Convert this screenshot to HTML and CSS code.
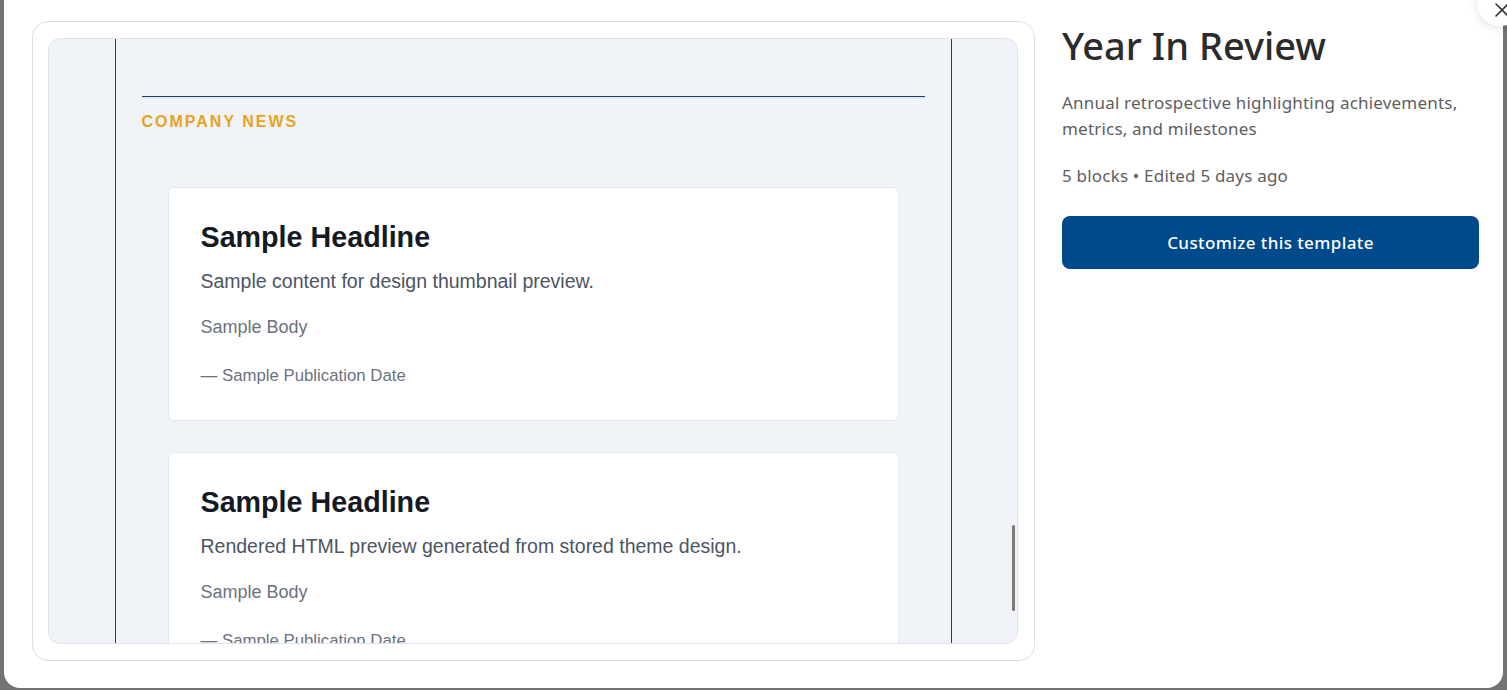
FILE: index.html
```html
<!DOCTYPE html>
<html lang="en">
<head>
<meta charset="utf-8">
<title>Year In Review</title>
<link rel="stylesheet" href="styles.css">
</head>
<body>
<div class="modal">
  <div class="preview-card">
    <div class="preview">
      <div class="sheet">
        <div class="sheet-top"></div>
        <div class="section">
          <div class="section-title">COMPANY NEWS</div>
          <div class="cards">
            <div class="news">
              <div class="news-head">Sample Headline</div>
              <div class="news-sub">Sample content for design thumbnail preview.</div>
              <div class="news-body">Sample Body</div>
              <div class="news-date">— Sample Publication Date</div>
            </div>
            <div class="news">
              <div class="news-head">Sample Headline</div>
              <div class="news-sub">Rendered HTML preview generated from stored theme design.</div>
              <div class="news-body">Sample Body</div>
              <div class="news-date">— Sample Publication Date</div>
            </div>
          </div>
        </div>
      </div>
      <div class="thumb"></div>
    </div>
  </div>
  <div class="info">
    <h1 class="title">Year In Review</h1>
    <p class="desc">Annual retrospective highlighting achievements, metrics, and milestones</p>
    <p class="meta">5 blocks • Edited 5 days ago</p>
    <button class="cta">Customize this template</button>
  </div>
</div>
<button class="close" aria-label="Close">
  <svg width="16" height="16" viewBox="0 0 16 16"><path d="M2 2L14 14M14 2L2 14" stroke="#333" stroke-width="1.6" stroke-linecap="round" fill="none"/></svg>
</button>
</body>
</html>
```

FILE: styles.css
```css
html, body {
  margin: 0;
  padding: 0;
  height: 100%;
  overflow: hidden;
}
body {
  background: #737373;
  font-family: "Noto Sans", "Open Sans", sans-serif;
  position: relative;
}
.modal {
  margin: -20px 4px 0;
  height: 708px;
  box-sizing: border-box;
  background: #fff;
  border-radius: 16px;
  padding: 41px 24px 0 28px;
  display: grid;
  grid-template-columns: 1003px 1fr;
  column-gap: 27px;
  align-items: start;
}
.preview-card {
  height: 640px;
  box-sizing: border-box;
  border: 1px solid #dcdcdc;
  border-radius: 16px;
  padding: 16px 16px 16px 15px;
}
.preview {
  position: relative;
  height: 606px;
  background: #f0f4f9;
  border: 1px solid #e2e6ec;
  border-radius: 12px;
  overflow: hidden;
  box-sizing: border-box;
}
.sheet {
  width: 837px;
  margin: 0 auto;
  box-sizing: border-box;
  border-left: 1px solid #1f3a68;
  border-right: 1px solid #1f3a68;
  min-height: 100%;
  font-family: "Liberation Sans", Arial, sans-serif;
}
.sheet-top {
  height: 57px;
}
.section {
  padding: 0 26px;
}
.section-title {
  border-top: 1px solid #1f3a68;
  box-shadow: 0 2px 0 0 #e4e9f1 inset;
  padding-top: 16px;
  color: #e8a322;
  font-weight: 700;
  font-size: 16px;
  letter-spacing: 2px;
  line-height: 18px;
}
.cards {
  padding: 56px 26px 0;
  display: flex;
  flex-direction: column;
  gap: 31px;
}
.news {
  background: #fff;
  border: 1px solid #e5e9ef;
  border-radius: 6px;
  padding: 33px 32px 34px;
}
.news-head {
  font-size: 28.7px;
  font-weight: 700;
  color: #141a24;
  line-height: 32px;
}
.news-sub {
  margin-top: 16px;
  font-size: 19.5px;
  color: #4b5563;
  line-height: 24px;
}
.news-body {
  margin-top: 23px;
  font-size: 18px;
  color: #6b7280;
  line-height: 22px;
}
.news-date {
  margin-top: 28px;
  font-size: 16.8px;
  color: #6b7280;
  line-height: 20px;
}
.thumb {
  position: absolute;
  right: 2px;
  top: 486px;
  width: 3px;
  height: 86px;
  background: #7b7b7b;
  border-radius: 2px;
}
.info {
  display: flex;
  flex-direction: column;
}
.title {
  margin: 1px 0 0;
  font-size: 38px;
  font-weight: 500;
  color: #2b2b2b;
  line-height: 46px;
  letter-spacing: 0;
}
.desc {
  margin: 22px 0 0;
  font-size: 17px;
  letter-spacing: 0.2px;
  line-height: 26px;
  color: #5e5e5e;
}
.meta {
  margin: 22px 0 0;
  font-size: 17px;
  letter-spacing: 0.2px;
  line-height: 24px;
  color: #5e5e5e;
}
.cta {
  margin-top: 28px;
  height: 53px;
  border: none;
  border-radius: 8px;
  background: #004a8b;
  color: #fff;
  font-family: "Noto Sans", "Open Sans", sans-serif;
  font-size: 17px;
  letter-spacing: 0.4px;
  font-weight: 500;
}
.close {
  position: absolute;
  left: 1477px;
  top: -20px;
  width: 46px;
  height: 46px;
  border-radius: 50%;
  border: none;
  background: #fff;
  box-shadow: 0 2px 10px rgba(0,0,0,0.12);
  padding: 0;
  display: flex;
  align-items: center;
  justify-content: center;
}
.close svg {
  margin-top: 14px;
  margin-left: 4px;
}
```
